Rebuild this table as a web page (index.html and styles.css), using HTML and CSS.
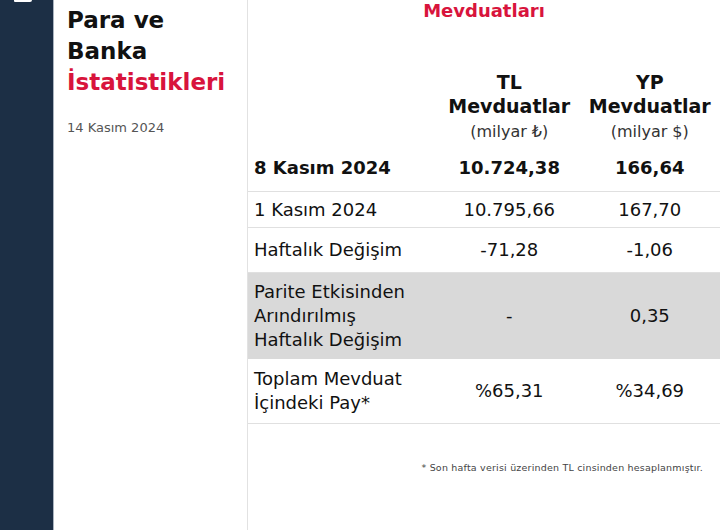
FILE: index.html
```html
<!DOCTYPE html>
<html lang="tr">
<head>
<meta charset="utf-8">
<link rel="stylesheet" href="styles.css">
</head>
<body>
<div class="page">
  <aside class="sidebar">
    <div class="logo-tip"></div>
  </aside>
  <section class="intro">
    <h1 class="title">Para ve<br>Banka<br><span class="red">İstatistikleri</span></h1>
    <p class="date">14 Kasım 2024</p>
  </section>
  <main class="content">
    <h2 class="heading">Mevduatları</h2>
    <table class="data">
      <thead>
        <tr>
          <th class="lbl"></th>
          <th>TL<br>Mevduatlar<br><span class="unit">(milyar ₺)</span></th>
          <th>YP<br>Mevduatlar<br><span class="unit">(milyar $)</span></th>
        </tr>
      </thead>
      <tbody>
        <tr class="r1 bold">
          <td class="lbl">8 Kasım 2024</td><td>10.724,38</td><td>166,64</td>
        </tr>
        <tr class="r2">
          <td class="lbl">1 Kasım 2024</td><td>10.795,66</td><td>167,70</td>
        </tr>
        <tr class="r3">
          <td class="lbl">Haftalık Değişim</td><td>-71,28</td><td>-1,06</td>
        </tr>
        <tr class="r4 shade">
          <td class="lbl">Parite Etkisinden<br>Arındırılmış<br>Haftalık Değişim</td><td>-</td><td>0,35</td>
        </tr>
        <tr class="r5">
          <td class="lbl">Toplam Mevduat<br>İçindeki Pay*</td><td>%65,31</td><td>%34,69</td>
        </tr>
      </tbody>
    </table>
    <p class="note">* Son hafta verisi üzerinden TL cinsinden hesaplanmıştır.</p>
  </main>
</div>
</body>
</html>
```
FILE: styles.css
```css
html, body {
  margin: 0;
  padding: 0;
  background: #ffffff;
}
body {
  font-family: "DejaVu Sans", "Noto Sans", sans-serif;
  color: #111111;
  width: 720px;
  height: 530px;
  overflow: hidden;
}
.page {
  display: flex;
  height: 530px;
}
.sidebar {
  width: 53px;
  flex: none;
  background: #1c2f45;
  border-right: 1px solid #aab4bf;
}
.logo-tip {
  margin-left: 14px;
  width: 18px;
  height: 2px;
  background: #ffffff;
  border-radius: 0 0 4px 2px;
}
.intro {
  width: 180px;
  flex: none;
  padding-left: 13px;
  border-right: 1px solid #e2e2e2;
}
.title {
  margin: 5px 0 0 0;
  font-size: 23px;
  line-height: 31px;
  font-weight: bold;
  color: #111111;
}
.red {
  color: #d8143c;
}
.date {
  margin: 21px 0 0 0;
  font-size: 13px;
  line-height: 18px;
  color: #555555;
}
.content {
  flex: 1;
  display: flex;
  flex-direction: column;
}
.heading {
  margin: 0;
  padding-top: 0;
  font-size: 18px;
  line-height: 22px;
  font-weight: bold;
  color: #d8143c;
  text-align: center;
}
.data {
  margin-top: 48px;
  width: 100%;
  border-collapse: collapse;
  font-size: 18px;
}
.data th {
  font-size: 19px;
  line-height: 24px;
  font-weight: bold;
  text-align: center;
  padding: 0 0 1px 0;
  vertical-align: top;
}
.data th.lbl {
  width: 191px;
}
.unit {
  font-weight: normal;
  font-size: 16px;
  color: #333333;
}
.data td {
  text-align: center;
  padding: 0;
  line-height: 24px;
  border-bottom: 1px solid #e0e0e0;
  vertical-align: middle;
}
.data td.lbl {
  text-align: left;
  padding-left: 6px;
}
.bold td {
  font-weight: bold;
}
.r1 td { height: 46px; }
.r2 td { height: 35px; }
.r3 td { height: 44px; }
.r4 td { height: 86px; border-bottom: none; }
.r5 td { height: 64px; }
.shade td {
  background: #d9d9d9;
}
.note {
  margin: 38px 17px 0 0;
  text-align: right;
  font-size: 9.5px;
  letter-spacing: 0.2px;
  color: #444444;
}
```
